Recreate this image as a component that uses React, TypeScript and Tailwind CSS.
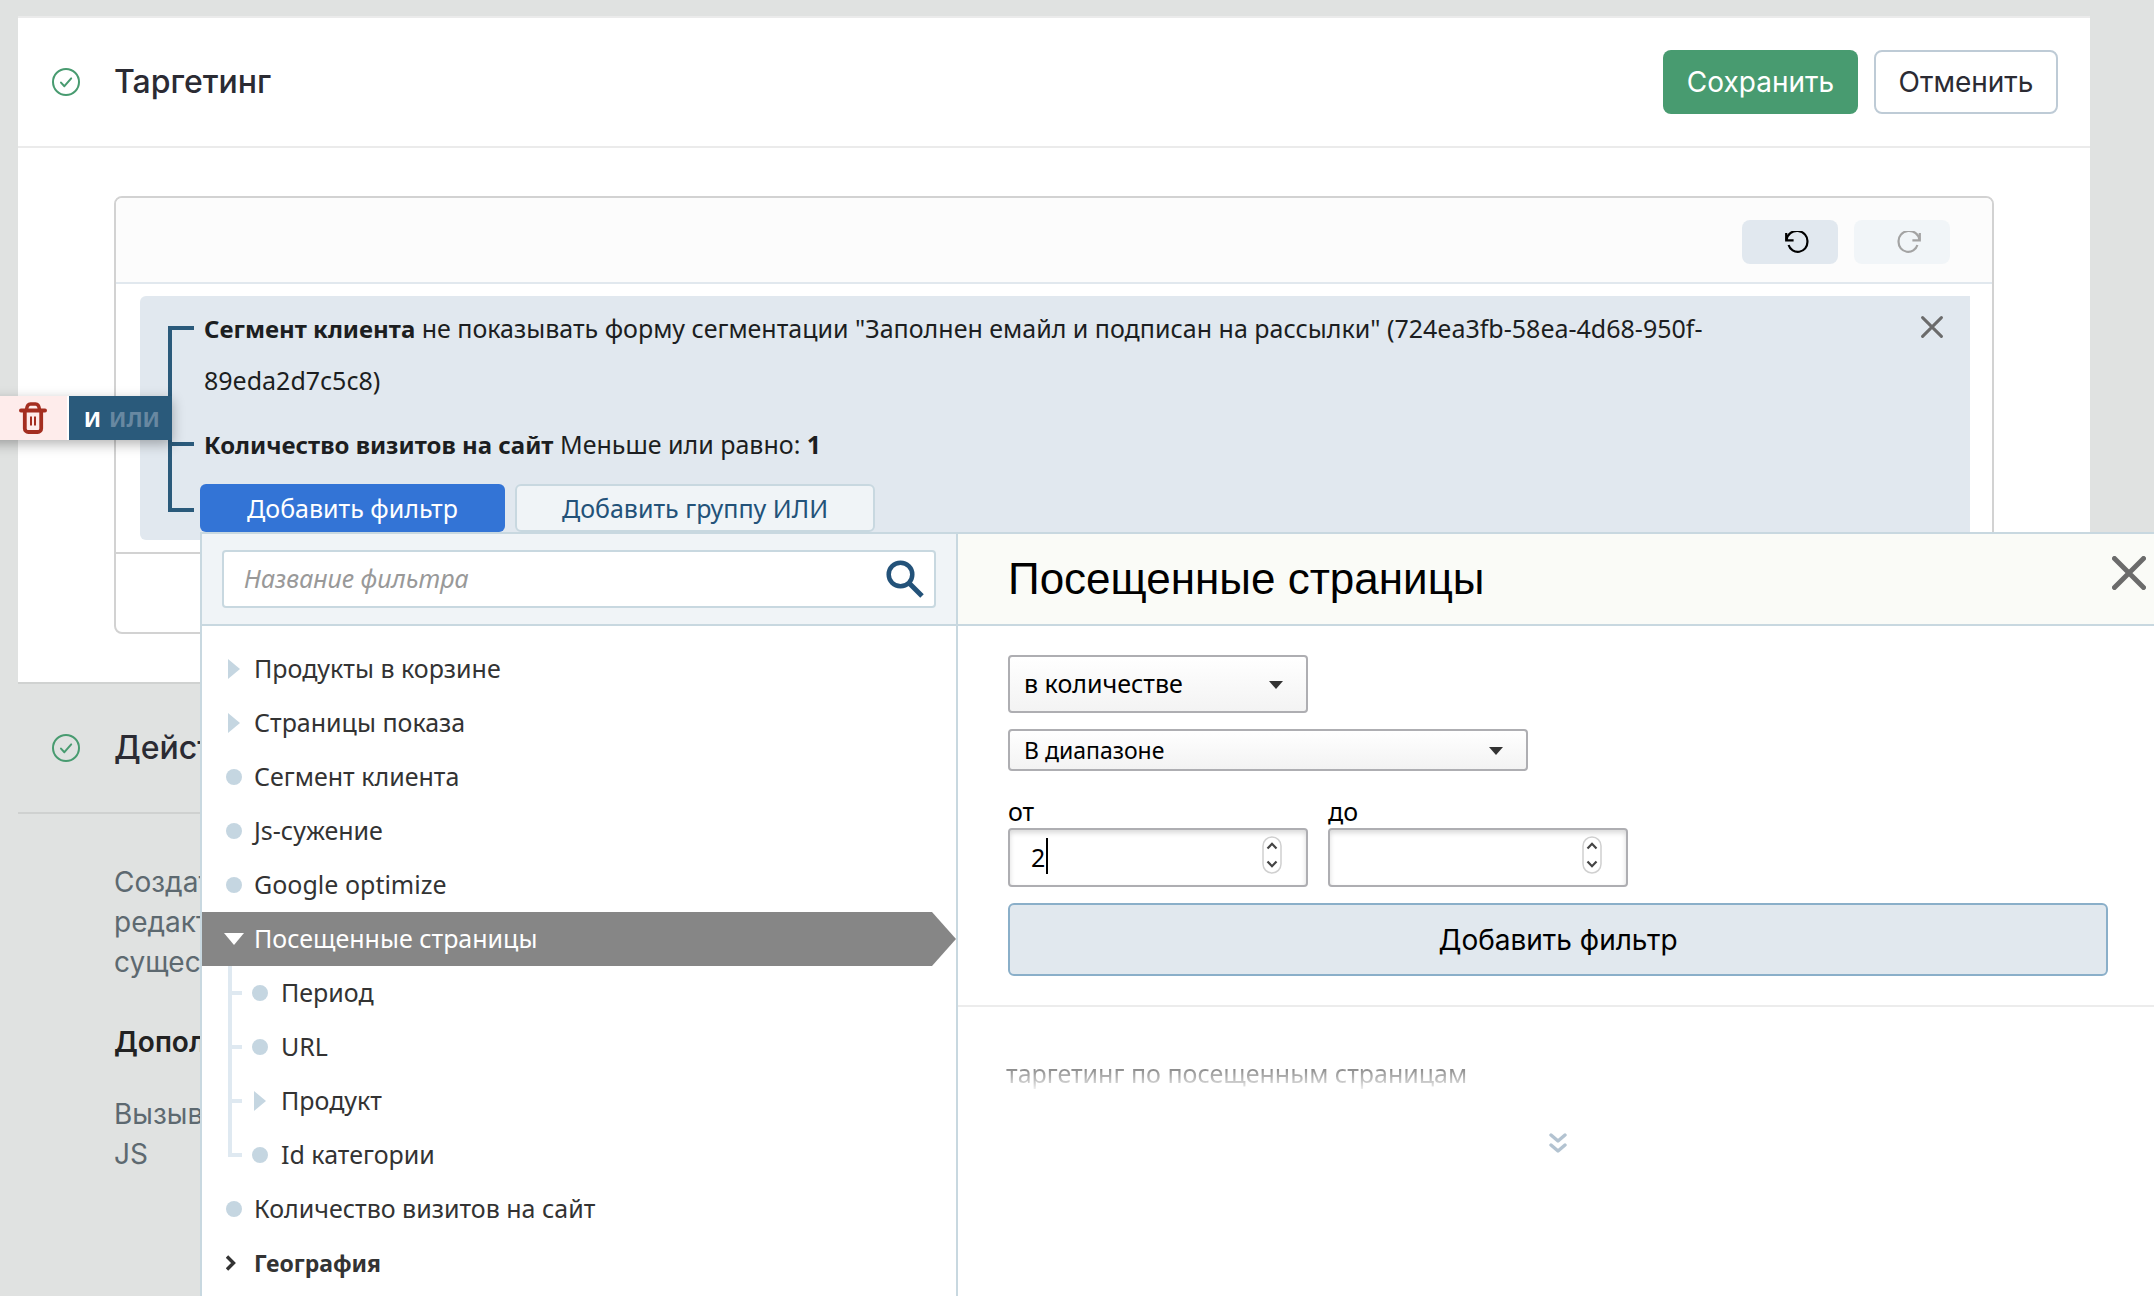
import type { ReactNode } from "react";
import { clsx } from "clsx";

type Marker = "closed" | "dot" | "open" | "chevron";

type FilterItem = {
  label: string;
  marker: Marker;
  active?: boolean;
  bold?: boolean;
  children?: FilterItem[];
};

const filters: FilterItem[] = [
  { label: "Продукты в корзине", marker: "closed" },
  { label: "Страницы показа", marker: "closed" },
  { label: "Сегмент клиента", marker: "dot" },
  { label: "Js-сужение", marker: "dot" },
  { label: "Google optimize", marker: "dot" },
  {
    label: "Посещенные страницы",
    marker: "open",
    active: true,
    children: [
      { label: "Период", marker: "dot" },
      { label: "URL", marker: "dot" },
      { label: "Продукт", marker: "closed" },
      { label: "Id категории", marker: "dot" }
    ]
  },
  { label: "Количество визитов на сайт", marker: "dot" },
  { label: "География", marker: "chevron", bold: true }
];

function CheckCircle() {
  return (
    <svg viewBox="0 0 28 28" className="h-7 w-7 shrink-0" fill="none" stroke="#489b70" strokeLinecap="round" strokeLinejoin="round">
      <circle cx="14" cy="14" r="13" strokeWidth="2" />
      <path d="M9 14.6l3.4 3.6 6.8-7.8" strokeWidth="2" />
    </svg>
  );
}

function Cross({ className, width }: { className: string; width: number }) {
  return (
    <svg viewBox="0 0 22 22" className={className} fill="none" stroke="#6b6b6b" strokeWidth={width} strokeLinecap="round">
      <path d="M1.6 1.6l18.8 18.8M20.4 1.6L1.6 20.4" />
    </svg>
  );
}

function RotateIcon({ className }: { className: string }) {
  return (
    <svg viewBox="0 0 24 22" className={className} fill="none" stroke="currentColor" strokeWidth="2.2">
      <path d="M1.2 2v7.400h7.400" />
      <path d="M1.600 9A10 9.600 0 0 1 22.400 11A9.600 9.600 0 0 1 3.600 14" />
    </svg>
  );
}

function TrashIcon() {
  return (
    <svg viewBox="0 0 28 32" className="h-8 w-7" fill="none" stroke="#a42e20">
      <path d="M2 8.6h24" strokeWidth="4" strokeLinecap="round" />
      <path d="M7.5 7.5C8 3.5 9.5 2 11.5 2h5c2 0 3.5 1.5 4 5.5" strokeWidth="3.5" />
      <path d="M5.8 9v17.5a3.5 3.5 0 0 0 3.5 3.5h9.4a3.5 3.5 0 0 0 3.5-3.5V9" strokeWidth="3.8" />
      <path d="M12 14.5v9M16 14.5v9" strokeWidth="2" />
    </svg>
  );
}

function MarkerIcon({ marker }: { marker: Marker }) {
  if (marker === "dot") return <span className="h-4 w-4 rounded-full bg-[#c5d6e1]" />;
  if (marker === "closed") {
    return (
      <svg viewBox="0 0 12 20" className="ml-0.5 h-5 w-3" fill="#c5d6e1">
        <path d="M0 0l12 10L0 20z" />
      </svg>
    );
  }
  if (marker === "open") {
    return (
      <svg viewBox="0 0 20 12" className="-ml-0.5 h-3 w-5 shrink-0" fill="#fff">
        <path d="M0 0h20L10 12z" />
      </svg>
    );
  }
  return (
    <svg viewBox="0 0 10 16" className="h-4 w-2.5" fill="none" stroke="#333" strokeWidth="3.4">
      <path d="M1 1.5L7.5 8 1 14.5" />
    </svg>
  );
}

function FilterRow({ item, nested }: { item: FilterItem; nested?: boolean }) {
  return (
    <button
      className={clsx(
        "flex h-[54px] w-full items-center text-left",
        nested ? "pl-2.5" : "pl-6",
        item.active ? "bg-[#868686] text-white [clip-path:polygon(0_0,calc(100%-24px)_0,100%_50%,calc(100%-24px)_100%,0_100%)]" : "text-[#333]",
        item.bold ? "text-[23px] font-bold" : "text-[25px]"
      )}
    >
      <span className={clsx("flex shrink-0 items-center", nested ? "w-[29px]" : "w-7")}>
        <MarkerIcon marker={item.marker} />
      </span>
      {item.label}
    </button>
  );
}

function FilterTree() {
  return (
    <ul className="pt-4">
      {filters.map((item) => (
        <li key={item.label}>
          <FilterRow item={item} />
          {item.children && (
            <ul>
              {item.children.map((child, i) => (
                <li key={child.label} className="flex pl-[26px]">
                  <span className={clsx("w-1 shrink-0 bg-[#dfe9f1]", i === item.children!.length - 1 ? "h-[29px]" : "h-[54px]")} />
                  <span className="mt-[25px] h-1 w-2.5 shrink-0 bg-[#dfe9f1]" />
                  <FilterRow item={child} nested />
                </li>
              ))}
            </ul>
          )}
        </li>
      ))}
    </ul>
  );
}

function SelectBox({ label, value, className }: { label: string; value: string; className: string }) {
  return (
    <div className={clsx("relative", className)}>
      <select
        aria-label={label}
        defaultValue={value}
        className="h-full w-full appearance-none rounded-[4px] border-2 border-[#aeaeb2] bg-linear-to-b from-white to-[#f3f3f3] pl-3.5 text-black"
      >
        <option>{value}</option>
      </select>
      <svg viewBox="0 0 14 8" className="pointer-events-none absolute top-1/2 right-[25px] h-2 w-3.5 -translate-y-[3px]" fill="#333">
        <path d="M0 0h14L7 8z" />
      </svg>
    </div>
  );
}

function NumberField({ id, label, value, caret }: { id: string; label: string; value?: string; caret?: boolean }) {
  return (
    <div className="w-[300px]">
      <label htmlFor={id} className="block h-[31px] text-[25px] leading-7 text-black">
        {label}
      </label>
      <div className="relative">
        <input
          id={id}
          type="number"
          defaultValue={value}
          className="h-[59px] w-full rounded-[4px] border-2 border-[#aeaeb2] pb-0.5 pl-[21px] text-[25px] text-black shadow-[inset_0_3px_5px_rgba(0,0,0,0.15)] outline-none [appearance:textfield] [&::-webkit-inner-spin-button]:appearance-none"
        />
        {caret && <span className="absolute top-2.5 left-[38px] h-9 w-0.5 bg-black" />}
        <svg viewBox="0 0 20 38" className="absolute top-2 right-[26px] h-[38px] w-5" fill="none">
          <rect x="1" y="1" width="18" height="36" rx="9" stroke="#d0d0d0" strokeWidth="1.5" fill="#fff" />
          <path d="M5.500 12.500L10 7.800l4.500 4.700M5.500 25.500l4.500 4.700 4.500-4.700" stroke="#444" strokeWidth="2.2" />
        </svg>
      </div>
    </div>
  );
}

function FilterPopup() {
  return (
    <div className="absolute top-[532px] right-0 bottom-0 left-[200px] z-20 flex overflow-hidden border-t-2 border-l-2 border-[#c8d8e0] bg-white font-['Noto_Sans',sans-serif]">
      <div className="w-[756px] shrink-0 border-r-2 border-[#c8d8e0]">
        <div className="flex h-[92px] items-center border-b-2 border-[#c8d8e0] bg-[#f0f4f7] px-5">
          <div className="flex h-[58px] w-full items-center rounded-[4px] border-2 border-[#c8d8e0] bg-white pr-2.5 pl-5">
            <input
              type="search"
              aria-label="Название фильтра"
              placeholder="Название фильтра"
              className="min-w-0 flex-1 text-[25px] italic outline-none placeholder:text-[#999]"
            />
            <svg viewBox="0 0 38 38" className="h-[38px] w-[38px]" fill="none" stroke="#235279">
              <circle cx="14.5" cy="14.5" r="11.8" strokeWidth="4.5" />
              <path d="M23.5 23.5l12.5 12.5" strokeWidth="5" />
            </svg>
          </div>
        </div>
        <FilterTree />
      </div>

      <div className="min-w-0 flex-1">
        <div className="flex h-[92px] items-center justify-between border-b-2 border-[#c8d8e0] bg-[#fafbf7] pr-2 pl-[50px]">
          <h2 className="font-['Liberation_Sans',sans-serif] text-[44px] leading-[48px] text-black">Посещенные страницы</h2>
          <button aria-label="Закрыть" className="mb-3">
            <Cross className="h-[34px] w-[34px]" width={3.2} />
          </button>
        </div>

        <div className="flex flex-col border-b-2 border-[#ececec] px-[50px] pt-[29px] pb-[29px]">
          <SelectBox label="Условие" value="в количестве" className="h-[58px] w-[300px] text-[25px]" />
          <SelectBox label="Сравнение" value="В диапазоне" className="mt-4 h-[42px] w-[520px] text-[23px]" />
          <div className="mt-[26px] flex gap-5">
            <NumberField id="from" label="от" value="2" caret />
            <NumberField id="to" label="до" />
          </div>
          <button className="mt-4 mr-[-4px] h-[73px] rounded-md border-2 border-[#8aafc9] bg-[#e1e8ee] font-['Inter',sans-serif] text-[28px] text-black">
            Добавить фильтр
          </button>
        </div>

        <div className="flex flex-col items-center pl-1">
          <p className="w-full bg-linear-to-b from-[#777] from-70% to-[#eee] bg-clip-text pt-[50px] pl-11 text-[25px] leading-8 text-transparent">
            таргетинг по посещенным страницам
          </p>
          <button aria-label="Показать подробнее" className="mt-11">
            <svg viewBox="0 0 18 20" className="h-5 w-[18px]" fill="none" stroke="#b3c3d1" strokeWidth="3.4" strokeLinecap="round" strokeLinejoin="round">
              <path d="M2 2l7 6 7-6M2 12l7 6 7-6" />
            </svg>
          </button>
        </div>
      </div>
    </div>
  );
}

function SectionHeader({ title, className, children }: { title: string; className: string; children?: ReactNode }) {
  return (
    <header className={clsx("flex h-[130px] items-center border-b-2 pr-8 pl-[34px]", className)}>
      <CheckCircle />
      <h2 className="mr-auto ml-[34px] text-[32px] font-medium text-[#2b2b33]">{title}</h2>
      {children}
    </header>
  );
}

function SegmentGroup() {
  return (
    <div className="relative flex rounded-l-md bg-[#e1e8ef] font-['Noto_Sans',sans-serif] text-[25px] leading-[52px] text-[#1c1e21]">
      <div className="mt-[30px] mb-[28px] ml-7 w-[26px] shrink-0 border-y-4 border-l-4 border-[#2a5a7b]">
        <div className="mt-28 h-1 bg-[#2a5a7b]" />
      </div>
      <div className="flex-1 pt-[6px] pb-2 pl-1.5">
        <p className="pl-1">
          <b className="text-[24px] leading-none">Сегмент клиента</b> не показывать форму сегментации "Заполнен емайл и подписан на рассылки"
          (724ea3fb-58ea-4d68-950f-89eda2d7c5c8)
        </p>
        <p className="mt-3 pl-1">
          <b className="text-[24px] leading-none">Количество визитов на сайт</b> Меньше или равно: <b>1</b>
        </p>
        <div className="mt-3.5 flex gap-2.5">
          <button className="h-12 w-[305px] rounded-md bg-[#3374d6] leading-8 text-white">Добавить фильтр</button>
          <button className="h-12 w-[360px] rounded-md border-2 border-[#c8d8e0] bg-[#f0f4f7] leading-8 text-[#235279]">
            Добавить группу ИЛИ
          </button>
        </div>
      </div>
      <button aria-label="Удалить фильтр" className="mt-5 mr-[27px] ml-[60px] self-start">
        <Cross className="h-[22px] w-[22px]" width={3} />
      </button>

      <div className="absolute top-[100px] right-full -mr-8 flex h-11 items-stretch shadow-[0_4px_12px_rgba(0,0,0,0.3)]">
        <button aria-label="Удалить группу" className="flex w-[87px] items-center justify-end border-r-2 border-white bg-[#feeceb] pr-5">
          <TrashIcon />
        </button>
        <button className="flex w-[103px] items-center justify-end gap-2 bg-[#2a5a7b] pr-3 text-[22px] leading-8 font-bold text-white">
          И <span className="text-[#6888a1]">ИЛИ</span>
        </button>
      </div>
    </div>
  );
}

export default function App() {
  return (
    <div className="relative min-h-screen overflow-hidden bg-[#e0e2e1] font-['Inter',sans-serif]">
      <main className="mr-16 ml-[18px] pt-4">
        <section className="border-y-2 border-t-[#ebebeb] border-b-[#d0d2d1] bg-white">
          <SectionHeader title="Таргетинг" className="border-[#ebebeb]">
            <button className="h-16 w-[195px] rounded-lg bg-[#489b70] text-[28px] text-white">Сохранить</button>
            <button className="ml-4 h-16 w-[184px] rounded-lg border-2 border-[#becbd6] bg-white text-[28px] text-[#2b2b33]">Отменить</button>
          </SectionHeader>
          <div className="px-24 py-12">
            <div className="rounded-lg border-2 border-[#d2d2d2]">
              <div className="flex h-[86px] items-center justify-end gap-4 rounded-t-md border-b-2 border-[#e1e8ee] bg-[#fcfcfc] pt-1 pr-[42px]">
                <button aria-label="Отменить действие" className="flex h-11 w-24 items-center justify-end rounded-lg bg-[#e1e8ef] pr-[29px]">
                  <RotateIcon className="h-[22px] w-6 text-black" />
                </button>
                <button aria-label="Повторить действие" disabled className="flex h-11 w-24 items-center justify-end rounded-lg bg-[#f1f5f8] pr-[29px]">
                  <RotateIcon className="h-[22px] w-6 -scale-x-100 text-[#a3a3a3]" />
                </button>
              </div>
              <div className="pt-3 pr-[22px] pb-3 pl-6">
                <SegmentGroup />
              </div>
              <div className="h-20 border-t-2 border-[#d2d2d2]" />
            </div>
          </div>
        </section>

        <section>
          <SectionHeader title="Дейст" className="border-[#cfd1d0]" />
          <div className="pt-12 pl-24 text-[28px] leading-10 text-[#5d6970]">
            <p>
              Создат
              <br />
              редакт
              <br />
              сущес
            </p>
            <h3 className="mt-10 font-semibold text-[#222]">Допол</h3>
            <p className="mt-8">
              Вызыв
              <br />
              JS
            </p>
          </div>
        </section>
      </main>
      <FilterPopup />
    </div>
  );
}
